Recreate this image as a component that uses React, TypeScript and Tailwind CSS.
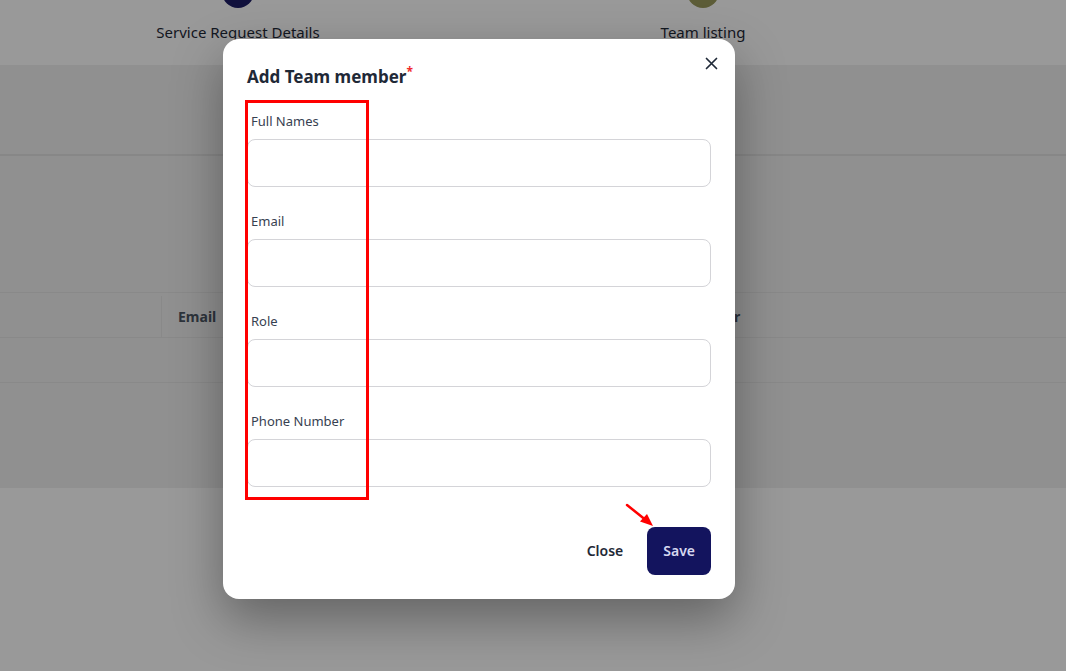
import React from "react";

const font = { fontFamily: '"Noto Sans", "Open Sans", Arial, sans-serif' };

function Field({ label }: { label: string }) {
  return (
    <div className="flex flex-col">
      <label className="pl-1 text-[13px] leading-5 text-[#374151] mb-2">{label}</label>
      <input className="h-12 w-full rounded-lg border border-[#d4d4d8] bg-white px-3 text-sm outline-none" />
    </div>
  );
}

export default function App() {
  return (
    <div className="relative h-[671px] w-[1066px] overflow-hidden bg-white" style={font}>
      {/* Underlying page */}
      <div className="flex h-[65px] w-full">
        <div className="flex w-[476px] flex-col items-center">
          <div className="-mt-6 h-8 w-8 rounded-full bg-[#1d1d66]" />
          <div className="mt-[14px] text-[15px] leading-5 text-[#1f2937]">Service Request Details</div>
        </div>
        <div className="flex w-[454px] flex-col items-center">
          <div className="-mt-6 h-8 w-8 rounded-full bg-[#9a9a5c]" />
          <div className="mt-[14px] text-[15px] leading-5 text-[#1f2937]">Team listing</div>
        </div>
      </div>
      <div className="h-[423px] w-full bg-[#f1f1f1]">
        <div className="h-[91px] border-b-2 border-[#e2e2e2]" />
        <div className="h-[136px]" />
        <div className="flex h-[46px] border-y border-[#e4e4e4] pt-[3px] text-sm font-bold text-[#4b5563]">
          <div className="w-[162px] border-r border-[#e4e4e4]" />
          <div className="flex w-[231px] items-center px-4">Email</div>
          <div className="flex w-[226px] items-center px-4">Role</div>
          <div className="flex items-center px-4">Phone Number</div>
        </div>
        <div className="h-[45px] border-b border-[#e4e4e4]" />
      </div>

      {/* Overlay */}
      <div className="absolute inset-0 bg-black/40">
        <div className="pl-[223px] pt-[39px]">
          <div className="relative w-[512px] rounded-2xl bg-white px-6 pt-6 pb-6 shadow-[0_20px_50px_rgba(0,0,0,0.35)]">
            <button className="absolute right-[12px] top-[12px] flex h-6 w-6 items-center justify-center text-[#1f2937]">
              <svg width="13" height="13" viewBox="0 0 13 13" fill="none" stroke="currentColor" strokeWidth="1.7" strokeLinecap="round">
                <path d="M1.5 1.5 L11.5 11.5 M11.5 1.5 L1.5 11.5" />
              </svg>
            </button>
            <h2 className="text-[17px] font-bold leading-7 text-[#1f2937]">
              Add Team member<sup className="text-[12px] font-bold text-[#ef2b2b] -top-[0.6em]">*</sup>
            </h2>
            <div className="mt-5 flex flex-col gap-6">
              <Field label="Full Names" />
              <Field label="Email" />
              <Field label="Role" />
              <Field label="Phone Number" />
            </div>
            <div className="mt-10 flex items-center justify-end gap-2">
              <button className="h-12 px-4 text-sm font-semibold text-[#1f2937]">Close</button>
              <button className="h-12 rounded-lg bg-[#13145e] px-4 text-sm font-semibold text-[#d6d7ef]">Save</button>
            </div>
          </div>
        </div>
      </div>

      {/* Annotations */}
      <div className="absolute left-[245px] top-[100px] h-[400px] w-[124px] border-[3px] border-[#ff0000]" />
      <svg className="absolute left-[620px] top-[498px]" width="40" height="34" viewBox="0 0 40 34">
        <line x1="7" y1="7" x2="27" y2="23" stroke="#ff0000" strokeWidth="2.5" strokeLinecap="round" />
        <polygon points="33,28 20,23.5 27,16" fill="#ff0000" />
      </svg>
    </div>
  );
}
